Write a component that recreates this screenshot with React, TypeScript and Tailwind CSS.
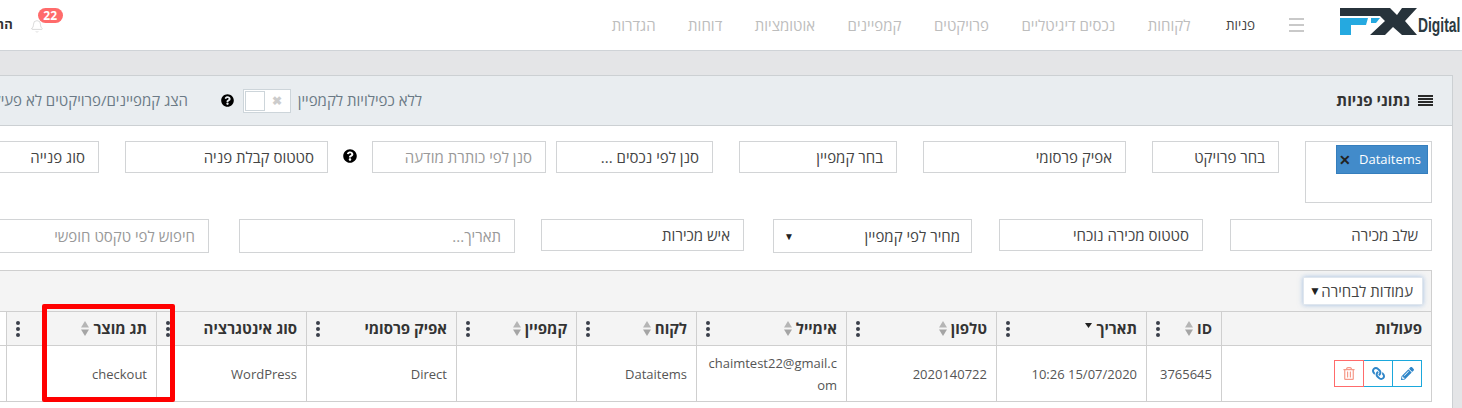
import type { ReactNode } from 'react'
import { Bell } from 'lucide-react'
import { FaLink, FaPencilAlt, FaQuestionCircle, FaRegTrashAlt } from 'react-icons/fa'

const navItems = ['לקוחות', 'נכסים דיגיטליים', 'פרויקטים', 'קמפיינים', 'אוטומציות', 'דוחות', 'הגדרות']

function Dots() {
  return (
    <span className="flex flex-col gap-[2px]">
      <span className="w-[4px] h-[4px] rounded-full bg-[#3a3f4a]"></span>
      <span className="w-[4px] h-[4px] rounded-full bg-[#3a3f4a]"></span>
      <span className="w-[4px] h-[4px] rounded-full bg-[#3a3f4a]"></span>
    </span>
  )
}

function SortArrows() {
  return (
    <svg width="8" height="15" viewBox="0 0 8 15" className="shrink-0">
      <path d="M4 0 L8 6.5 L0 6.5 Z" fill="#b5b5b5" />
      <path d="M4 15 L8 8.5 L0 8.5 Z" fill="#a5a5a5" />
    </svg>
  )
}

function Box({ text, width, gap, placeholder, height }: { text: string; width: string; gap?: string; placeholder?: boolean; height?: string }) {
  return (
    <div className={`${width} ${gap ?? ''} ${height ?? 'h-[32px]'} shrink-0 flex items-center px-[13px] border border-[#d2d4d6] text-[15px] ${placeholder ? 'text-[#999]' : 'text-[#444]'}`}>
      {text}
    </div>
  )
}

function HeadCell({ title, sort, date }: { title: string; sort?: boolean; date?: boolean }) {
  return (
    <th className="border border-[#cfcfcf] bg-[#f4f4f4] px-[9px] font-bold text-[15px] text-[#333] text-right">
      <div className="flex items-center justify-between">
        <span className="flex items-center gap-[4px]">
          {title}
          {sort && <SortArrows />}
          {date && (
            <svg width="7" height="5" viewBox="0 0 7 5" className="mb-[7px]">
              <path d="M0 0 H7 L3.5 5 Z" fill="#222" />
            </svg>
          )}
        </span>
        <Dots />
      </div>
    </th>
  )
}

function Td({ children, className }: { children?: ReactNode; className?: string }) {
  return <td className={`border border-[#cfcfcf] pr-[9px] pl-[10px] text-[13px] leading-[22px] text-[#555] text-right ${className ?? ''}`}>{children}</td>
}

export default function App() {
  return (
    <div dir="rtl" className="relative w-[1462px] h-[408px] overflow-hidden bg-[#e4e5e7] font-['Open_Sans','Noto_Sans',sans-serif]">
      {/* Top bar */}
      <header className="h-[51px] bg-white border-b border-[#cfd3d7] flex items-center w-[1600px]">
        {/* Logo */}
        <div className="w-[120px] h-[50px] shrink-0 mr-[2px] relative" dir="ltr">
          <svg width="77" height="28" viewBox="0 0 77 28" className="absolute left-0 top-[8px]">
            <path d="M0 0 H50 L57 7 L62 0 H77 L65 13 L77 27 H62 L53 19 L45 27 H30 L45 13 L40 8 H0 Z" fill="#27333b" />
            <path d="M0 10 H28 L26 17 H11 V27 H0 Z" fill="#25a9e0" />
            <path d="M31 10 H40 L36 15 H31 Z" fill="#25a9e0" />
          </svg>
          <span className="absolute left-[78px] top-[12px] origin-left scale-x-[0.66] font-['Liberation_Sans',sans-serif] font-bold text-[21px] leading-[26px] text-[#2c3a42]">Digital</span>
        </div>
        <div className="w-[15px] mr-[36px] flex flex-col gap-[4px] shrink-0">
          <span className="h-[2px] bg-[#c9c9c9]"></span>
          <span className="h-[2px] bg-[#c9c9c9]"></span>
          <span className="h-[2px] bg-[#c9c9c9]"></span>
        </div>
        <nav className="flex items-center gap-[32.5px] mr-[34px] text-[15px] text-[#bdbdbd] shrink-0">
          <span className="ml-[3px] text-[13.5px] text-[#444]">פניות</span>
          {navItems.map((item) => (
            <span key={item}>{item}</span>
          ))}
        </nav>
        <div className="relative mr-[565px] w-[20px] h-[20px] shrink-0">
          <Bell className="w-[14px] h-[15px] text-[#cfcfcf] absolute right-[3px] top-[4px]" strokeWidth={1.3} />
          <span className="absolute -top-[7px] -right-[16px] w-[25px] h-[15px] rounded-full bg-[#ff6b6b] text-white text-[12px] font-bold leading-[15px] text-center">22</span>
        </div>
        <span className="mr-[14px] text-[13px] font-bold text-[#333] shrink-0">החשבון שלי</span>
      </header>

      {/* Panel */}
      <section className="mt-[24px] mr-[9px] w-[1600px] border border-[#ccd0d3] bg-white">
        <div className="h-[50px] bg-[#e9edf0] border-b border-[#ccd0d3] flex items-center pr-[19px]">
          <svg width="15" height="11" viewBox="0 0 15 11" className="shrink-0">
            <path d="M0 0 H15 V2 H0 Z M0 3 H15 V5 H0 Z M0 6 H15 V8 H0 Z M0 9 H15 V11 H0 Z" fill="#2a2a2a" />
          </svg>
          <h2 className="mr-[8px] w-[73px] shrink-0 whitespace-nowrap text-[15.5px] font-bold text-[#333]">נתוני פניות</h2>
          <span className="mr-[915px] w-[127px] whitespace-nowrap text-[15px] text-[#6b7a86] shrink-0">ללא כפילויות לקמפיין</span>
          <div className="mr-[4px] w-[48px] h-[24px] shrink-0 border border-[#cdd5da] bg-white flex items-center" dir="ltr">
            <span className="w-[20px] h-[20px] border border-[#cdd5da] bg-white ml-[1px]"></span>
            <span className="ml-[7px] text-[12px] leading-none font-bold text-[#ccc]">✖</span>
          </div>
          <FaQuestionCircle className="mr-[9px] w-[13px] h-[13px] text-black shrink-0" />
          <span className="mr-[33px] text-[15px] text-[#6b7a86] shrink-0 whitespace-nowrap">הצג קמפיינים/פרויקטים לא פעילים</span>
        </div>

        <div className="pr-[20px] pt-[15px]">
          {/* Filters, first row */}
          <div className="flex items-start">
            <div className="w-[127px] h-[62px] shrink-0 border border-[#d2d4d6] p-[3px] pb-0">
              <div className="w-[92px] h-[29px] bg-[#428bca] border border-[#357ebd] text-white text-[13px] flex items-center gap-[8px] pr-[6px]">
                Dataitems
                <span className="text-[#222] font-bold text-[14px] leading-none">✕</span>
              </div>
            </div>
            <Box text="בחר פרויקט" width="w-[127px]" gap="mr-[26px]" />
            <Box text="אפיק פרסומי" width="w-[203px]" gap="mr-[26px]" />
            <Box text="בחר קמפיין" width="w-[158px]" gap="mr-[26px]" />
            <Box text="סנן לפי נכסים ..." width="w-[157px]" gap="mr-[26px]" />
            <Box text="סנן לפי כותרת מודעה" width="w-[174px]" gap="mr-[10px]" placeholder />
            <FaQuestionCircle className="mr-[15px] mt-[8px] w-[14px] h-[14px] text-black shrink-0" />
            <Box text="סטטוס קבלת פניה" width="w-[203px]" gap="mr-[15px]" />
            <Box text="סוג פנייה" width="w-[203px]" gap="mr-[26px]" />
          </div>

          {/* Filters, second row */}
          <div className="flex items-start mt-[16px]">
            <Box text="שלב מכירה" width="w-[202px]" />
            <Box text="סטטוס מכירה נוכחי" width="w-[204px]" gap="mr-[27px]" />
            <div className="w-[199px] h-[34px] mr-[27px] shrink-0 flex items-center justify-between px-[10px] border border-[#d2d4d6] text-[15px] text-[#444]">
              <span className="pr-[1px]">מחיר לפי קמפיין</span>
              <span className="text-[10px] text-[#222]">▼</span>
            </div>
            <Box text="איש מכירות" width="w-[203px]" gap="mr-[29px]" />
            <Box text="תאריך..." width="w-[276px]" gap="mr-[26px]" height="h-[34px]" placeholder />
            <Box text="חיפוש לפי טקסט חופשי" width="w-[276px]" gap="mr-[30px]" height="h-[34px]" placeholder />
          </div>

          {/* Table toolbar */}
          <div className="mt-[17px] h-[41px] bg-[#f4f4f4] border border-b-0 border-[#cfcfcf] flex items-center pr-[8px] w-[1525px]">
            <div className="w-[120px] h-[28px] flex items-center justify-between pr-[9px] pl-[5px] bg-white border border-[#dfe6ee] shadow-[0_0_5px_rgba(100,150,210,0.55)] text-[15px] text-[#444]">
              <span className="whitespace-nowrap">עמודות לבחירה</span>
              <span className="text-[12px] text-[#222]">▼</span>
            </div>
          </div>

          <table className="table-fixed w-[1525px] border-collapse">
            <colgroup>
              <col className="w-[210px]" />
              <col className="w-[75px]" />
              <col className="w-[150px]" />
              <col className="w-[150px]" />
              <col className="w-[150px]" />
              <col className="w-[120px]" />
              <col className="w-[120px]" />
              <col className="w-[150px]" />
              <col className="w-[150px]" />
              <col className="w-[150px]" />
              <col className="w-[100px]" />
            </colgroup>
            <thead>
              <tr className="h-[34px]">
                <th className="border border-[#cfcfcf] bg-[#f4f4f4] pr-[9px] font-bold text-[15px] text-[#333] text-right">פעולות</th>
                <th className="border border-l-0 border-[#cfcfcf] bg-[#f4f4f4] px-[9px] font-bold text-[14px] text-[#333] text-right">
                  <div className="flex items-center justify-between">
                    <span className="flex items-center gap-[4px]">ID<SortArrows /></span>
                    <Dots />
                  </div>
                </th>
                <HeadCell title="תאריך" date />
                <HeadCell title="טלפון" sort />
                <HeadCell title="אימייל" sort />
                <HeadCell title="לקוח" sort />
                <HeadCell title="קמפיין" sort />
                <HeadCell title="אפיק פרסומי" />
                <HeadCell title="סוג אינטגרציה" />
                <HeadCell title="תג מוצר" sort />
                <th className="border border-[#cfcfcf] bg-[#f4f4f4] p-0">
                  <div className="w-[22px] h-[33px] bg-white flex items-center justify-center">
                    <Dots />
                  </div>
                </th>
              </tr>
            </thead>
            <tbody>
              <tr className="h-[56px]">
                <Td>
                  <div className="flex">
                    <span className="w-[30px] h-[27px] border border-[#1ba8dc] flex items-center justify-center">
                      <FaPencilAlt className="w-[13px] h-[13px] text-[#2f86c9]" />
                    </span>
                    <span className="w-[30px] h-[27px] border border-[#1ba8dc] -mr-px flex items-center justify-center">
                      <FaLink className="w-[13px] h-[13px] text-[#2f86c9] -scale-x-100" />
                    </span>
                    <span className="w-[30px] h-[27px] border border-[#ff6b6b] -mr-px flex items-center justify-center">
                      <FaRegTrashAlt className="w-[12px] h-[13px] text-[#f59a8a]" />
                    </span>
                  </div>
                </Td>
                <Td className="border-l-0">3765645</Td>
                <Td><span dir="ltr">10:26 15/07/2020</span></Td>
                <Td>2020140722</Td>
                <Td className="break-all">chaimtest22@gmail.com</Td>
                <Td>Dataitems</Td>
                <Td></Td>
                <Td>Direct</Td>
                <Td>WordPress</Td>
                <Td>checkout</Td>
                <Td></Td>
              </tr>
            </tbody>
          </table>
          <div className="h-[20px]"></div>
        </div>
      </section>

      {/* Red highlight drawn over the table */}
      <div className="absolute left-[42px] top-[304px] w-[133px] h-[98px] border-[5px] border-[#ff0000] rounded-[2px]"></div>
    </div>
  )
}
